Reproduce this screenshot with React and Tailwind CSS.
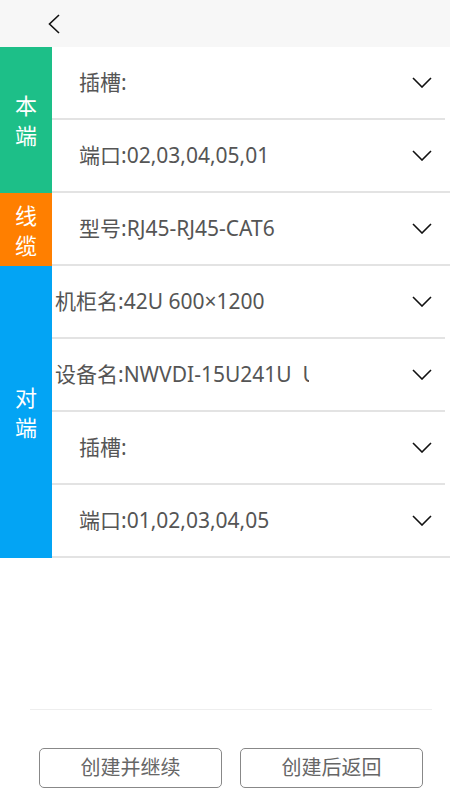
const font = { fontFamily: '"Noto Sans", "Noto Sans CJK SC", sans-serif' };

const Chevron = () => (
  <svg width="20" height="11" viewBox="0 0 20 11" fill="none">
    <path d="M1 1 L10 10 L19 1" stroke="#111" strokeWidth="1.6" />
  </svg>
);

const BackArrow = () => (
  <svg width="12" height="20" viewBox="0 0 12 20" fill="none">
    <path d="M11 1 L1.5 10 L11 19" stroke="#111" strokeWidth="1.6" />
  </svg>
);

const groups = [
  {
    label: ["本", "端"],
    color: "bg-[#1dbf88]",
    rows: [
      { text: "插槽:", indent: true },
      { text: "端口:02,03,04,05,01", indent: true },
    ],
  },
  {
    label: ["线", "缆"],
    color: "bg-[#ff7f00]",
    rows: [{ text: "型号:RJ45-RJ45-CAT6", indent: true }],
  },
  {
    label: ["对", "端"],
    color: "bg-[#03a4f4]",
    rows: [
      { text: "机柜名:42U 600×1200", indent: false },
      { text: "设备名:NWVDI-15U241U  U", indent: false, clip: true },
      { text: "插槽:", indent: true },
      { text: "端口:01,02,03,04,05", indent: true },
    ],
  },
];

const Row = ({ row, last }) => (
  <div
    className={
      last
        ? "h-[73px] flex items-center justify-between border-b-2 border-[#e3e3e3] pr-[18px]"
        : "h-[73px] flex items-center justify-between border-b-2 border-[#e3e3e3] mr-[5px] pr-[13px]"
    }
  >
    <div className={row.clip ? "w-[257px] overflow-hidden whitespace-pre" : ""}>
      <span
        className={
          row.indent
            ? "pl-[27px] text-[21px] text-[#555] whitespace-pre"
            : "pl-[3px] text-[21px] text-[#555] whitespace-pre"
        }
      >
        {row.text}
      </span>
    </div>
    <Chevron />
  </div>
);

export default function App() {
  return (
    <div className="h-[800px] flex flex-col bg-white" style={font}>
      <div className="h-[47px] bg-[#f7f7f7] flex items-center pl-[48px]">
        <BackArrow />
      </div>

      {groups.map((g, gi) => (
        <div key={gi} className="flex">
          <div
            className={`w-[52px] ${g.color} flex flex-col items-center justify-center text-white text-[22px] leading-[30px]`}
          >
            {g.label.map((c) => (
              <span key={c}>{c}</span>
            ))}
          </div>
          <div className="flex-1">
            {g.rows.map((r, ri) => (
              <Row key={ri} row={r} last={ri === g.rows.length - 1} />
            ))}
          </div>
        </div>
      ))}

      <div className="flex-1" />

      <div className="ml-[30px] mr-[18px] border-t border-[#eeeeee]" />
      <div className="flex gap-[18px] pl-[39px] pr-[27px] pt-[38px] pb-[12px]">
        <button className="w-[183px] h-[40px] border border-[#888] rounded-[5px] text-[20px] text-[#666]">
          创建并继续
        </button>
        <button className="w-[183px] h-[40px] border border-[#888] rounded-[5px] text-[20px] text-[#666]">
          创建后返回
        </button>
      </div>
    </div>
  );
}
